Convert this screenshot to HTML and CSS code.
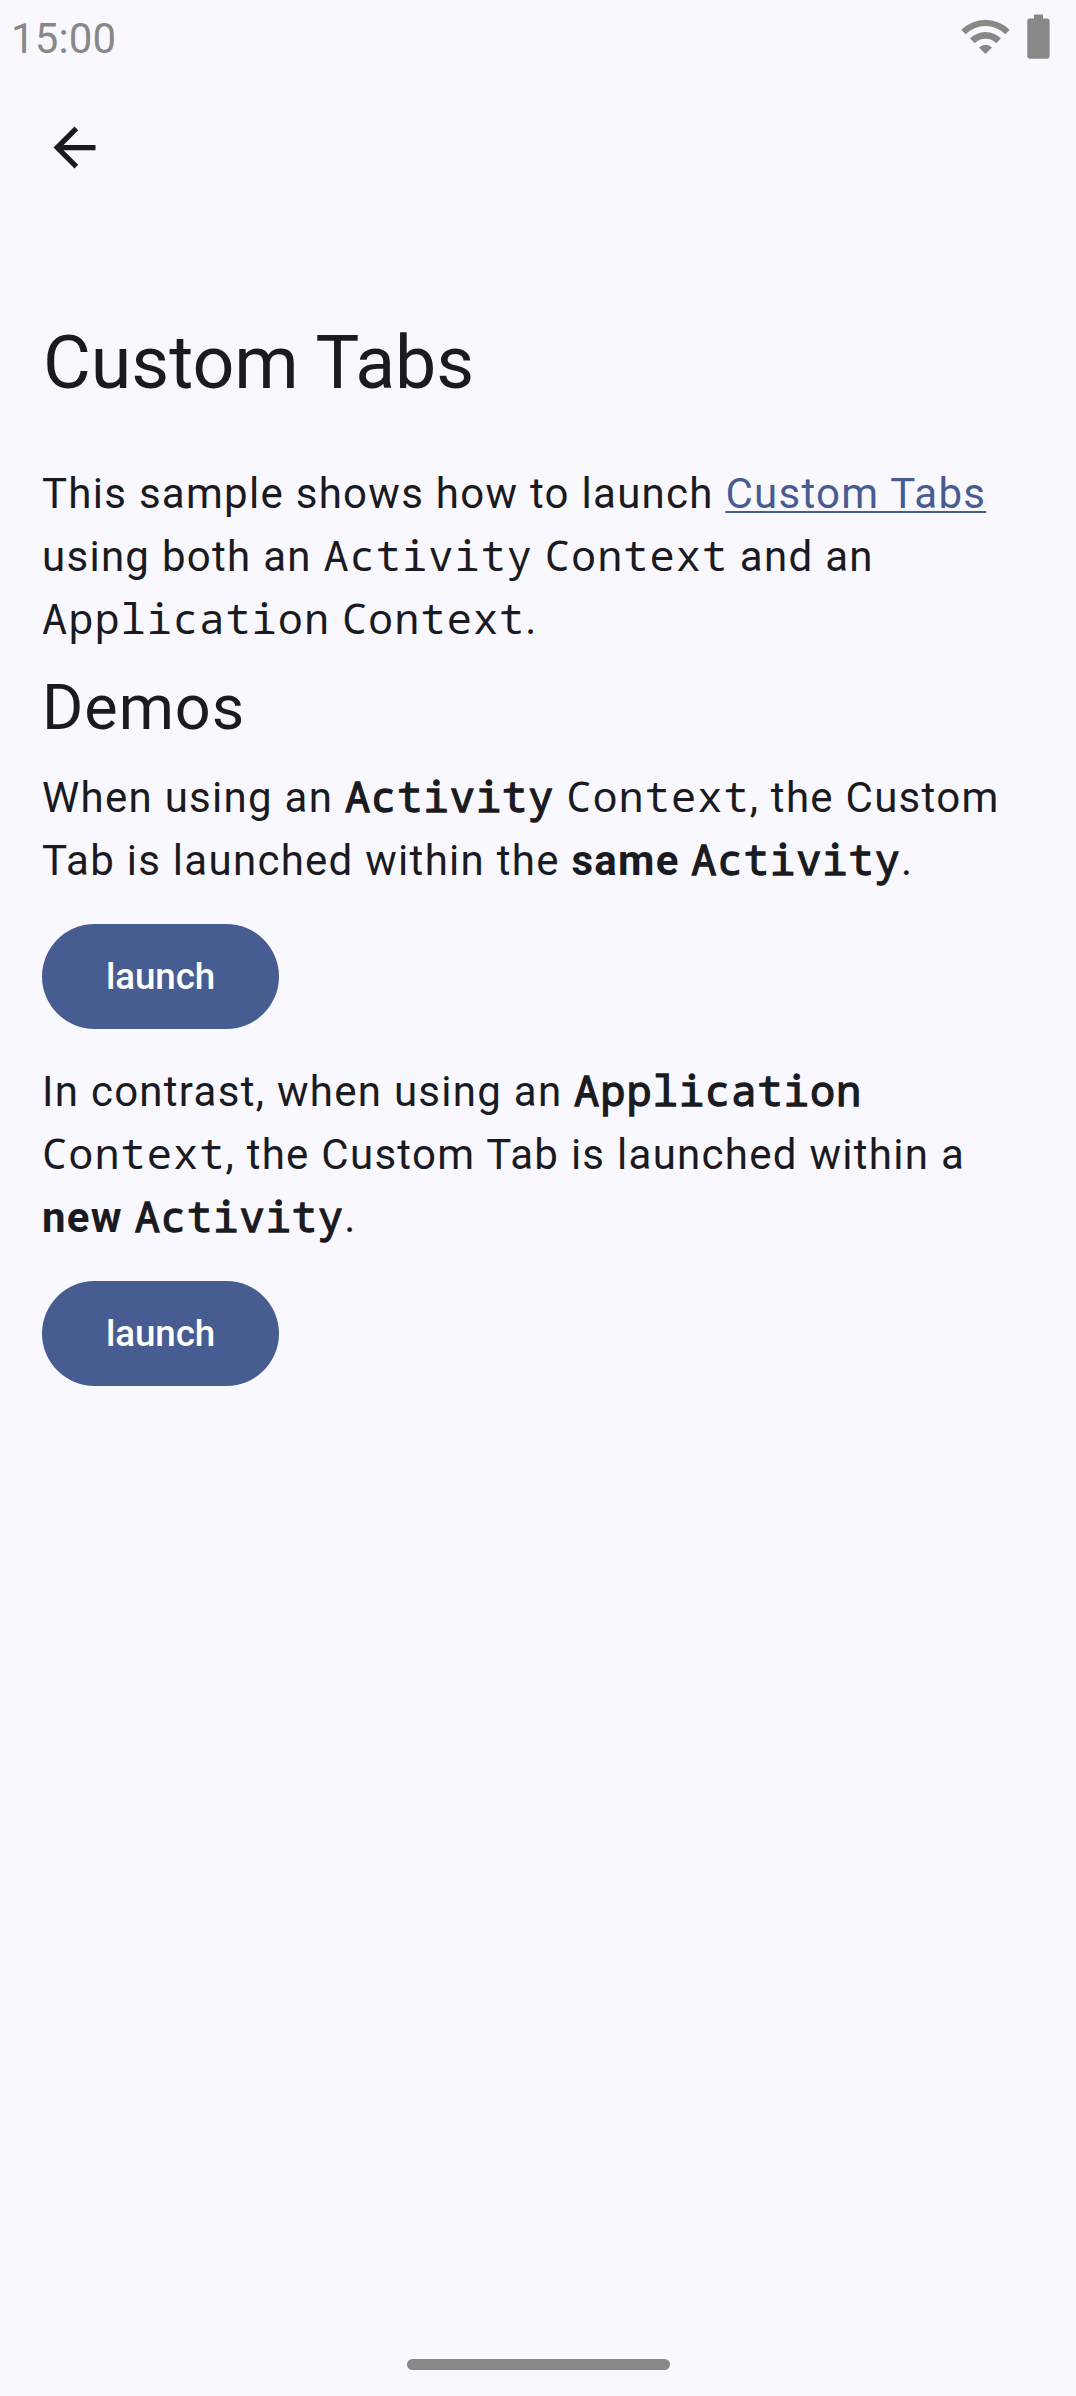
FILE: index.html
```html
<!DOCTYPE html>
<html lang="en">
<head>
<meta charset="utf-8">
<title>Custom Tabs</title>
<link rel="stylesheet" href="styles.css">
</head>
<body>
<div class="screen">
  <div class="status-bar">
    <span class="clock">15:00</span>
    <svg class="status-icons" width="92" height="48" viewBox="960 13 92 48" aria-hidden="true">
      <path d="M961.3 29.8A34.3 34.3 0 0 1 1009.7 29.8L1005.3 34.2A28 28 0 0 0 965.7 34.2Z"/>
      <path d="M970 38.5A21.9 21.9 0 0 1 1001 38.5L996.2 43.3A15.1 15.1 0 0 0 974.8 43.3Z"/>
      <path d="M979 47.5A9.2 9.2 0 0 1 992 47.5L985.5 54Z"/>
      <path d="M1034 14.5H1043V18.5H1047.2A2.4 2.4 0 0 1 1049.6 20.9V56.3A2.4 2.4 0 0 1 1047.2 58.7H1029.7A2.4 2.4 0 0 1 1027.3 56.3V20.9A2.4 2.4 0 0 1 1029.7 18.5H1034Z"/>
    </svg>
  </div>
  <header class="app-bar">
    <svg class="back" width="63" height="63" viewBox="0 0 24 24" aria-label="Back">
      <path d="M20 11H7.83l5.59-5.59L12 4l-8 8 8 8 1.41-1.41L7.83 13H20v-2z"/>
    </svg>
    <h1 class="title">Custom Tabs</h1>
  </header>
  <main class="content">
    <p class="text">This sample shows how to launch <a class="link">Custom Tabs</a> using both an <code class="code">Activity</code> <code class="code">Context</code> and an <code class="code">Application</code> <code class="code">Context</code>.</p>
    <h2 class="heading">Demos</h2>
    <p class="text">When using an <code class="code strong">Activity</code> <code class="code">Context</code>, the Custom Tab is launched within the <b class="bold">same</b> <code class="code strong">Activity</code>.</p>
    <button class="button">launch</button>
    <p class="text">In contrast, when using an <code class="code strong">Application</code> <code class="code">Context</code>, the Custom Tab is launched within a <b class="bold">new</b> <code class="code strong">Activity</code>.</p>
    <button class="button">launch</button>
  </main>
  <div class="gesture-bar"></div>
</div>
</body>
</html>
```

FILE: styles.css
```css
* { box-sizing: border-box; margin: 0; padding: 0; }
body { background: #faf8ff; color: #1a1b21; font-family: Roboto, "Liberation Sans", sans-serif; }
.screen { height: 2396px; display: flex; flex-direction: column; }
.status-bar { height: 63px; padding: 13px 24px 0 11px; display: flex; justify-content: space-between; align-items: flex-start; }
.clock { padding-top: 1px; font-size: 42px; line-height: 50px; letter-spacing: 0.1px; color: #888; }
.status-icons { fill: #888; }
.app-bar { height: 399px; padding: 53px 42px 0; display: flex; flex-direction: column; align-items: flex-start; }
.back { margin-left: 1px; fill: #1a1b21; }
.title { margin: 137px 0 0 1px; font-size: 73.5px; line-height: 94px; font-weight: 400; letter-spacing: -0.05px; }
.content { flex: 1; padding: 0 42px; display: flex; flex-direction: column; align-items: flex-start; }
.text { font-size: 42px; line-height: 63px; letter-spacing: 1.28px; }
.link { color: #475d92; text-decoration: underline; text-decoration-thickness: 2px; text-underline-offset: 3px; text-decoration-skip-ink: none; }
.code { font-family: "Droid Sans Mono", "Noto Sans Mono", "DejaVu Sans Mono", monospace; font-size: 42px; line-height: 1; letter-spacing: 1px; white-space: nowrap; }
.strong { -webkit-text-stroke: 1.3px currentColor; }
.bold { font-weight: 700; }
.heading { margin: 15px 0 16px; font-size: 63px; line-height: 84px; font-weight: 400; letter-spacing: 0.95px; }
.button { margin: 32px 0 31px; width: 237px; height: 105px; border: 0; border-radius: 53px; background: #475d92; color: #fff; font: 500 36.75px/52px Roboto, sans-serif; letter-spacing: -0.1px; }
.gesture-bar { width: 263px; height: 11px; margin: 0 0 26px 407px; border-radius: 6px; background: #888; }
```
